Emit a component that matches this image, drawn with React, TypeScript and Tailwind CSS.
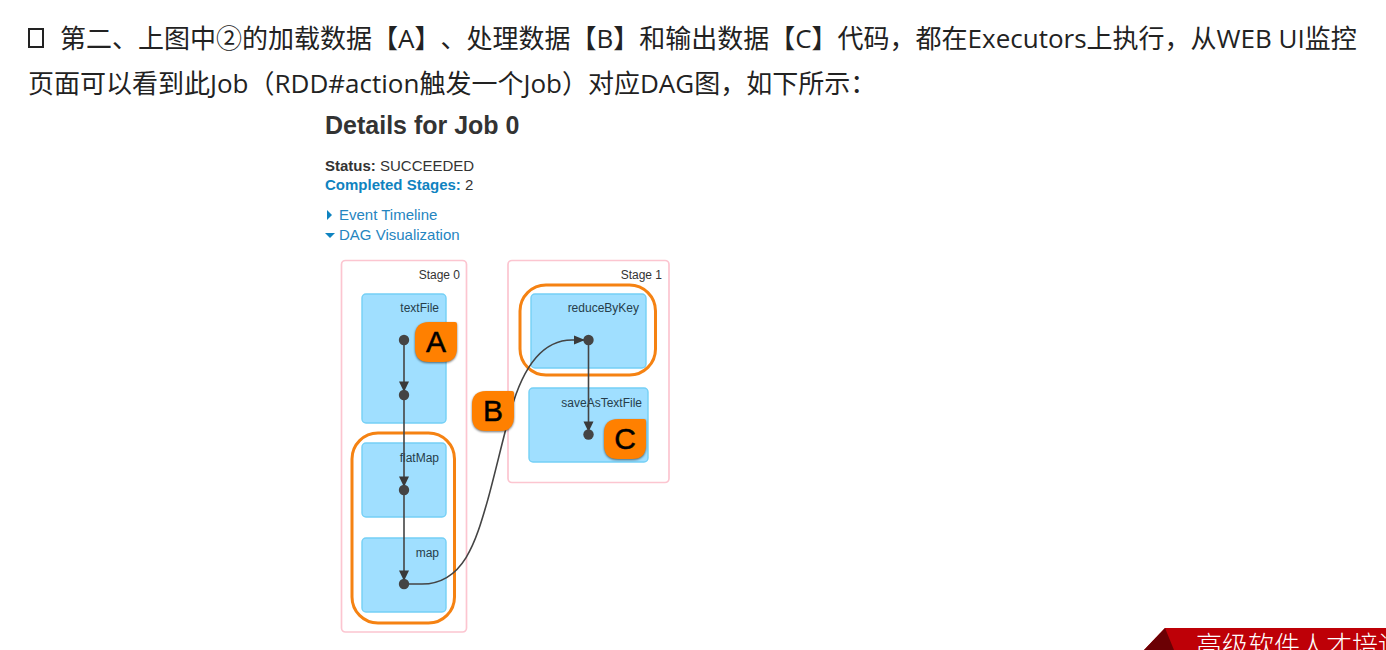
const operations = [
  { name: 'textFile', x: 362, y: 294, width: 84, height: 129, labelX: 439, labelY: 312 },
  { name: 'flatMap', x: 362, y: 443, width: 84, height: 74, labelX: 439, labelY: 462 },
  { name: 'map', x: 362, y: 538, width: 84, height: 74, labelX: 439, labelY: 557 },
  { name: 'reduceByKey', x: 531, y: 294, width: 115, height: 74, labelX: 639, labelY: 312 },
  { name: 'saveAsTextFile', x: 529, y: 388, width: 119, height: 74, labelX: 642, labelY: 407 },
];

const stages = [
  { name: 'Stage 0', x: 341.5, width: 125, height: 371.5, labelX: 460 },
  { name: 'Stage 1', x: 508, width: 161, height: 222, labelX: 662 },
];

const nodes = [
  [404, 340],
  [404, 395],
  [404, 490],
  [404, 584],
  [588.5, 340],
  [588.5, 434.5],
];

const badges = [
  { letter: 'A', x: 415, y: 322 },
  { letter: 'B', x: 472, y: 391 },
  { letter: 'C', x: 604, y: 419 },
];

function DagGraph() {
  return (
    <svg
      className="mt-[5px] block h-[378px] w-[360px] overflow-visible font-['Liberation_Sans',Arial,sans-serif]"
      viewBox="325 250 360 378"
      role="img"
      aria-label="DAG Visualization"
    >
      {stages.map((s) => (
        <g key={s.name}>
          <rect x={s.x} y={260.5} width={s.width} height={s.height} rx={4} fill="#fff" stroke="#fcc5d0" strokeWidth={1.7} />
          <text x={s.labelX} y={279} textAnchor="end" fontSize={12} fill="#333">{s.name}</text>
        </g>
      ))}
      {operations.map((o) => (
        <g key={o.name}>
          <rect x={o.x} y={o.y} width={o.width} height={o.height} rx={4} fill="#a0dfff" stroke="#74d0f6" strokeWidth={1.4} />
          <text x={o.labelX} y={o.labelY} textAnchor="end" fontSize={12} fill="#263d4a">{o.name}</text>
        </g>
      ))}
      <g fill="none" stroke="#f58212" strokeWidth={3}>
        <rect x={352} y={433} width={102.5} height={190} rx={26} />
        <rect x={520} y={285} width={135.5} height={90} rx={26} />
      </g>
      <g fill="none" stroke="#444" strokeWidth={1.6}>
        <path d="M404 340V584" />
        <path d="M588.5 340V434" />
        <path d="M404 584H422C464 584 476 541 488 499C496 470 503 438 511 410C522 371 540 340 572 340H584" />
      </g>
      <g fill="#3a3a3a">
        <path d="M399 381.500H409L404 392Z" />
        <path d="M399 476.500H409L404 487Z" />
        <path d="M399 570.500H409L404 581Z" />
        <path d="M583.500 421.500H593.500L588.500 432Z" />
        <path d="M574 335.500V344.500L585 340Z" />
      </g>
      {nodes.map(([x, y]) => (
        <circle key={`${x}-${y}`} cx={x} cy={y} r={5.2} fill="#444" />
      ))}
      {badges.map((b) => (
        <g key={b.letter} transform={`translate(${b.x} ${b.y})`}>
          <path className="drop-shadow-[0_1px_1px_#0000008c]" d="M14 0H40Q42 0 42 2V26Q42 40 28 40H14Q0 40 0 26V14Q0 0 14 0Z" fill="#ff8000" />
          <text x={21} y={30} textAnchor="middle" fontSize={30} fill="#000" stroke="#000" strokeWidth={0.5}>{b.letter}</text>
        </g>
      ))}
    </svg>
  );
}

export default function App() {
  return (
    <div className="flex min-h-screen flex-col overflow-hidden bg-white">
      <main className="pt-4">
        <p className="pr-4 pl-7 font-['Open_Sans','Noto_Sans_CJK_SC',sans-serif] text-[26px] leading-[45px] text-[#222] [text-spacing-trim:space-all]">
          <span className="mr-4 inline-block h-5 w-4 border-2 border-[#222]" aria-hidden="true" />
          第二、上图中②的加载数据【A】、处理数据【B】和输出数据【C】代码，都在Executors上执行，从WEB UI监控
          <br />
          页面可以看到此Job（RDD#action触发一个Job）对应DAG图，如下所示：
        </p>
        <section className="pl-[325px] font-['Liberation_Sans',Arial,sans-serif] text-[15px] leading-[19px] text-[#333]">
          <h1 className="text-[25px] leading-[38px] font-bold">Details for Job 0</h1>
          <p className="mt-3">
            <strong>Status:</strong> SUCCEEDED
          </p>
          <p>
            <a href="#completed" className="font-bold text-[#0f83c0]">Completed Stages:</a> 2
          </p>
          <div className="mt-[11px] flex flex-col items-start leading-5 text-[#2585bf]">
            <button type="button" className="flex items-center gap-1">
              <svg className="h-2.5 w-2.5" viewBox="0 0 10 10" fill="#0f83c0" aria-hidden="true"><path d="M2 0L7 5L2 10Z" /></svg>
              Event Timeline
            </button>
            <button type="button" className="flex items-center gap-1">
              <svg className="h-2.5 w-2.5" viewBox="0 0 10 10" fill="#0f83c0" aria-hidden="true"><path d="M0 3H10L5 8Z" /></svg>
              DAG Visualization
            </button>
          </div>
          <DagGraph />
        </section>
      </main>
      <footer className="mt-auto flex h-[22px] items-start justify-end overflow-hidden">
        <svg className="h-[22px] w-[30px] shrink-0" viewBox="0 0 30 22" aria-hidden="true">
          <path d="M21 0H30V22H0Z" fill="#be0007" />
          <path d="M21 0L30 22H0Z" fill="#6b0004" />
        </svg>
        <div className="h-[22px] w-[212px] shrink-0 bg-[#be0007] pl-[22px] font-['Noto_Sans_CJK_SC',sans-serif] text-[26px] leading-8 font-light whitespace-nowrap text-white">
          高级软件人才培训
        </div>
      </footer>
    </div>
  );
}
